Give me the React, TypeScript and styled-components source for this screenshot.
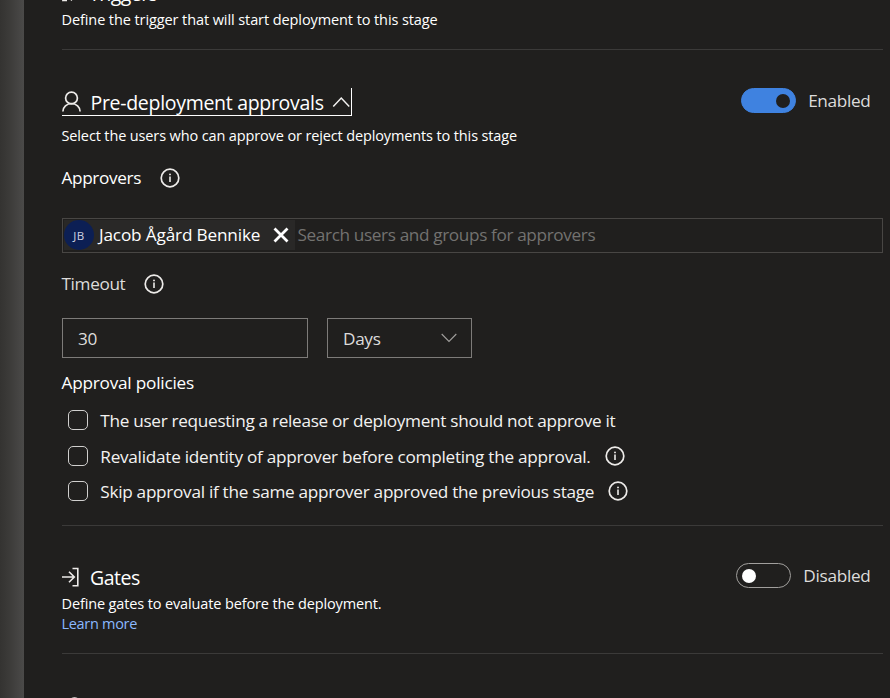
import React from "react";
import styled, { createGlobalStyle } from "styled-components";

const GlobalStyle = createGlobalStyle`
  * { box-sizing: border-box; }
  body {
    margin: 0;
    overflow: hidden;
    background: #201f1e;
    color: #fff;
    font-family: "Open Sans", "Noto Sans", sans-serif;
  }
  svg { display: block; flex: none; }
`;

const Page = styled.div`
  display: flex;
  height: 698px;
  overflow: hidden;
`;

const Edge = styled.div`
  flex: none;
  width: 24px;
  background: linear-gradient(90deg, #343331 0%, #3c3b39 40%, #4b4a49 100%);
`;

const Panel = styled.main`
  flex: 1;
  min-width: 0;
  padding: 0 7px 0 38px;
`;

const Section = styled.section<{ $top: number; $bottom: number }>`
  padding: ${(p) => p.$top}px 0 ${(p) => p.$bottom}px;
  border-bottom: 1px solid #3b3a39;
`;

const TriggerSection = styled(Section)`
  margin-top: -21px;
`;

const SectionHead = styled.div`
  display: flex;
  justify-content: space-between;
  align-items: flex-start;
`;

const Heading = styled.h2<{ $spacing?: number; $focused?: boolean }>`
  display: flex;
  align-items: center;
  height: 28px;
  margin: 0;
  font-size: 19.5px;
  font-weight: 400;
  line-height: 27px;
  letter-spacing: ${(p) => p.$spacing ?? -0.3}px;
  white-space: nowrap;
  border: 0 solid #fff;
  border-width: ${(p) => (p.$focused ? "0 1px 1px 0" : "0")};
`;

const HeadingText = styled.span<{ $drop?: number; $left?: number }>`
  padding-top: ${(p) => p.$drop ?? 0}px;
  margin-left: ${(p) => p.$left ?? 9}px;
`;

const Chevron = styled.svg`
  margin: 1px 1px 0 8px;
`;

const Description = styled.p<{ $spacing: number; $gap?: number }>`
  height: 20px;
  margin: ${(p) => p.$gap ?? 0}px 0 0 -0.5px;
  font-size: 14.5px;
  line-height: 22px;
  letter-spacing: ${(p) => p.$spacing}px;
  white-space: nowrap;
`;

const Link = styled.a`
  color: #8ab8ff;
`;

const ToggleGroup = styled.div<{ $spacing: number; $gap: number }>`
  display: flex;
  align-items: center;
  gap: ${(p) => p.$gap}px;
  height: 25px;
  margin-right: 12.500px;
  color: #dddcdb;
  font-size: 17.2px;
  line-height: 25px;
  letter-spacing: ${(p) => p.$spacing}px;
`;

const Toggle = styled.span<{ $on?: boolean }>`
  display: flex;
  align-items: center;
  justify-content: ${(p) => (p.$on ? "flex-end" : "flex-start")};
  width: 55px;
  height: 25px;
  padding: 0 5px;
  border: 1px solid ${(p) => (p.$on ? "#3f82e0" : "#a19f9d")};
  border-radius: 13px;
  background: ${(p) => (p.$on ? "#3f82e0" : "transparent")};
`;

const Knob = styled.span<{ $on?: boolean }>`
  width: 14px;
  height: 14px;
  border-radius: 50%;
  background: ${(p) => (p.$on ? "#201f1e" : "#fff")};
`;

const Label = styled.div<{ $spacing: number; $gap: number; $muted?: boolean }>`
  display: flex;
  align-items: center;
  height: 24px;
  margin: ${(p) => p.$gap}px 0 0 -0.5px;
  padding-top: 2px;
  color: ${(p) => (p.$muted ? "#dddcdb" : "#fff")};
  font-size: 17.2px;
  line-height: 24px;
  letter-spacing: ${(p) => p.$spacing}px;
  white-space: nowrap;
`;

const InfoSlot = styled.span<{ $left: number }>`
  margin-left: ${(p) => p.$left}px;
`;

const PeoplePicker = styled.div`
  display: flex;
  height: 35px;
  margin-top: 29px;
  padding: 1px;
  border: 1px solid #484644;
  font-size: 17.2px;
  line-height: 30px;
  white-space: nowrap;
`;

const Persona = styled.div`
  display: flex;
  align-items: center;
  width: 231px;
  height: 30px;
  background: #292827;
  letter-spacing: -0.16px;
`;

const Avatar = styled.span`
  width: 30px;
  height: 30px;
  flex: none;
  margin-right: 5px;
  border-radius: 50%;
  background: #0c1f54;
  color: #d0d3e0;
  font-size: 11.5px;
  line-height: 31px;
  letter-spacing: 0.6px;
  text-align: center;
`;

const PersonaName = styled.span`
  width: 162px;
`;

const RemoveIcon = styled.svg`
  margin: -1px 0 0 11.5px;
`;

const Placeholder = styled.span`
  margin-left: 2.5px;
  color: #737270;
  letter-spacing: -0.37px;
`;

const Fields = styled.div`
  display: flex;
  gap: 19px;
  margin-top: 23px;
`;

const Field = styled.div<{ $width: number }>`
  display: flex;
  align-items: center;
  justify-content: space-between;
  width: ${(p) => p.$width}px;
  height: 40px;
  padding: 1px 14px 0 15px;
  border: 1px solid #7d7b79;
  color: #dddcdb;
  font-size: 17.2px;
  letter-spacing: -0.33px;
`;

const SelectChevron = styled.svg`
  margin-top: -2px;
`;

const Policies = styled.div`
  display: grid;
  grid-template-rows: 36px 35px 24px;
  margin-top: 14px;
`;

const Policy = styled.label<{ $spacing: number }>`
  display: flex;
  align-items: center;
  height: 24px;
  padding-left: 6px;
  color: #f3f2f1;
  font-size: 17.2px;
  line-height: 24px;
  letter-spacing: ${(p) => p.$spacing}px;
  white-space: nowrap;
`;

const PolicyText = styled.span`
  padding-top: 2px;
`;

const Box = styled.span`
  width: 20px;
  height: 20px;
  margin-right: 12.3px;
  border: 1px solid #d0cfce;
  border-radius: 5px;
`;

const NextSection = styled.div`
  padding: 42.500px 0 0 3px;
`;

const InfoIcon = () => (
  <svg width="20" height="20" viewBox="0 0 20 20" fill="none" stroke="#edebe9">
    <circle cx="10" cy="10" r="8.8" strokeWidth="1.7" />
    <path d="M10 8.5v5.5" strokeWidth="1.6" />
    <circle cx="10" cy="6.4" r=".95" fill="#edebe9" stroke="none" />
  </svg>
);

const PersonIcon = () => (
  <svg width="19" height="21" viewBox="0 0 19 21" fill="none" stroke="#edebe9" strokeWidth="1.7">
    <circle cx="9.5" cy="7" r="5.9" />
    <path d="M.9 20.5a8.6 8 0 0 1 17.2 0" />
  </svg>
);

const GateIcon = () => (
  <svg width="18" height="20" viewBox="0 0 18 20" fill="none" stroke="#edebe9" strokeWidth="1.6">
    <path d="M0 10h12.3M7 4.700l5.300 5.300L7 15.300M10.500 1.500h5.300v17.300h-5.300" />
  </svg>
);

const TriggerIcon = () => (
  <svg width="18" height="20" viewBox="0 0 18 20" fill="none" stroke="#edebe9" strokeWidth="1.5">
    <path d="M10 1 3 10h5L1 17.500h4M9 17.500l7-9h-5" />
  </svg>
);

export default function App() {
  return (
    <>
      <GlobalStyle />
      <Page>
        <Edge />
        <Panel>
          <TriggerSection $top={0} $bottom={20}>
            <Heading $spacing={-0.6}>
              <TriggerIcon />
              <HeadingText>Triggers</HeadingText>
            </Heading>
            <Description $spacing={-0.09} $gap={2}>
              Define the trigger that will start deployment to this stage
            </Description>
          </TriggerSection>

          <Section $top={38} $bottom={22}>
            <SectionHead>
              <Heading $focused>
                <PersonIcon />
                <HeadingText $drop={1} $left={9.5}>Pre-deployment approvals</HeadingText>
                <Chevron width="18.500" height="12" viewBox="0 0 18 12" fill="none" stroke="#f3f2f1" strokeWidth="1.5">
                  <path d="m1 10.500 8-8.500 8 8.500" />
                </Chevron>
              </Heading>
              <ToggleGroup $spacing={-0.33} $gap={12}>
                <Toggle $on><Knob $on /></Toggle>
                Enabled
              </ToggleGroup>
            </SectionHead>
            <Description $spacing={-0.13} $gap={9}>
              Select the users who can approve or reject deployments to this stage
            </Description>

            <Label $spacing={-0.36} $gap={20}>
              Approvers
              <InfoSlot $left={19}><InfoIcon /></InfoSlot>
            </Label>
            <PeoplePicker>
              <Persona>
                <Avatar>JB</Avatar>
                <PersonaName>Jacob Ågård Bennike</PersonaName>
                <RemoveIcon width="16" height="16" viewBox="0 0 16 16" stroke="#fff" strokeWidth="2.8">
                  <path d="m1.5 1.5 13 13M14.5 1.5l-13 13" />
                </RemoveIcon>
              </Persona>
              <Placeholder>Search users and groups for approvers</Placeholder>
            </PeoplePicker>

            <Label $spacing={-0.36} $gap={18} $muted>
              Timeout
              <InfoSlot $left={19}><InfoIcon /></InfoSlot>
            </Label>
            <Fields>
              <Field $width={246}>30</Field>
              <Field $width={145}>
                Days
                <SelectChevron width="16" height="10" viewBox="0 0 16 10" fill="none" stroke="#a19f9d" strokeWidth="1.1">
                  <path d="m.7 1 7.3 7.5L15.3 1" />
                </SelectChevron>
              </Field>
            </Fields>

            <Label $spacing={-0.22} $gap={12}>Approval policies</Label>
            <Policies>
              <Policy $spacing={-0.305}>
                <Box />
                <PolicyText>The user requesting a release or deployment should not approve it</PolicyText>
              </Policy>
              <Policy $spacing={-0.27}>
                <Box />
                <PolicyText>Revalidate identity of approver before completing the approval.</PolicyText>
                <InfoSlot $left={14}><InfoIcon /></InfoSlot>
              </Policy>
              <Policy $spacing={-0.29}>
                <Box />
                <PolicyText>Skip approval if the same approver approved the previous stage</PolicyText>
                <InfoSlot $left={14}><InfoIcon /></InfoSlot>
              </Policy>
            </Policies>
          </Section>

          <Section $top={37} $bottom={20}>
            <SectionHead>
              <Heading $spacing={-0.5}>
                <GateIcon />
                <HeadingText $drop={1} $left={10}>Gates</HeadingText>
              </Heading>
              <ToggleGroup $spacing={-0.3} $gap={12.5}>
                <Toggle><Knob /></Toggle>
                Disabled
              </ToggleGroup>
            </SectionHead>
            <Description $spacing={-0.13} $gap={2}>
              Define gates to evaluate before the deployment.
            </Description>
            <Description $spacing={-0.3}>
              <Link>Learn more</Link>
            </Description>
          </Section>

          <NextSection><PersonIcon /></NextSection>
        </Panel>
      </Page>
    </>
  );
}
